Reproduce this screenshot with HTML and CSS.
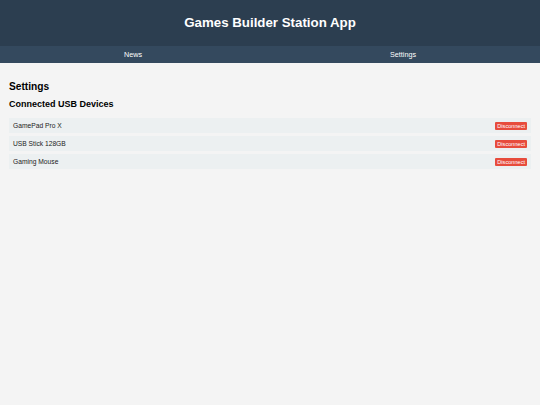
FILE: index.html
```html
<!DOCTYPE html>
<html lang="en">
<head>
    <meta charset="UTF-8">
    <meta name="viewport" content="width=device-width, initial-scale=1.0">
    <title>Games Builder Station App</title>
    <link rel="stylesheet" href="styles.css">
</head>
<body>
    <header class="app-header">
        <h1>Games Builder Station App</h1>
    </header>

    <nav class="app-nav">
        <a href="#news">News</a>
        <a href="#settings">Settings</a>
    </nav>

    <main class="content">
        <h2>Settings</h2>
        <h3>Connected USB Devices</h3>
        <ul class="device-list">
            <li class="device">
                <span>GamePad Pro X</span>
                <button class="disconnect">Disconnect</button>
            </li>
            <li class="device">
                <span>USB Stick 128GB</span>
                <button class="disconnect">Disconnect</button>
            </li>
            <li class="device">
                <span>Gaming Mouse</span>
                <button class="disconnect">Disconnect</button>
            </li>
        </ul>
    </main>
</body>
</html>
```

FILE: styles.css
```css
body {
    font-family: "Liberation Sans", Arial, sans-serif;
    background-color: #f4f4f4;
    margin: 0;
    padding: 0;
    color: #000;
}

.app-header {
    background-color: #2c3e50;
    height: 46px;
    display: flex;
    justify-content: center;
    align-items: center;
}

.app-header h1 {
    margin: 0 0 2px;
    color: #fff;
    font-size: 13.3px;
    font-weight: bold;
}

.app-nav {
    background-color: #34495e;
    height: 17px;
    display: flex;
    justify-content: space-around;
    align-items: center;
}

.app-nav a {
    color: #fff;
    font-size: 7.2px;
    text-decoration: none;
}

.content {
    padding: 8px 9px;
}

.content h2 {
    font-size: 10.2px;
    margin: 10px 0 7px;
}

.content h3 {
    font-size: 9px;
    margin: 0 0 9px;
}

.device-list {
    list-style: none;
    margin: 0;
    padding: 0;
    display: flex;
    flex-direction: column;
    gap: 3px;
}

.device {
    background-color: #ecf0f1;
    height: 15px;
    padding: 0 4px;
    display: flex;
    justify-content: space-between;
    align-items: center;
    font-size: 6.7px;
    color: #222;
}

.disconnect {
    background-color: #e74c3c;
    color: #fff;
    border: none;
    border-radius: 1px;
    font-family: inherit;
    font-size: 5.6px;
    padding: 1px 2px;
    cursor: pointer;
}
```
